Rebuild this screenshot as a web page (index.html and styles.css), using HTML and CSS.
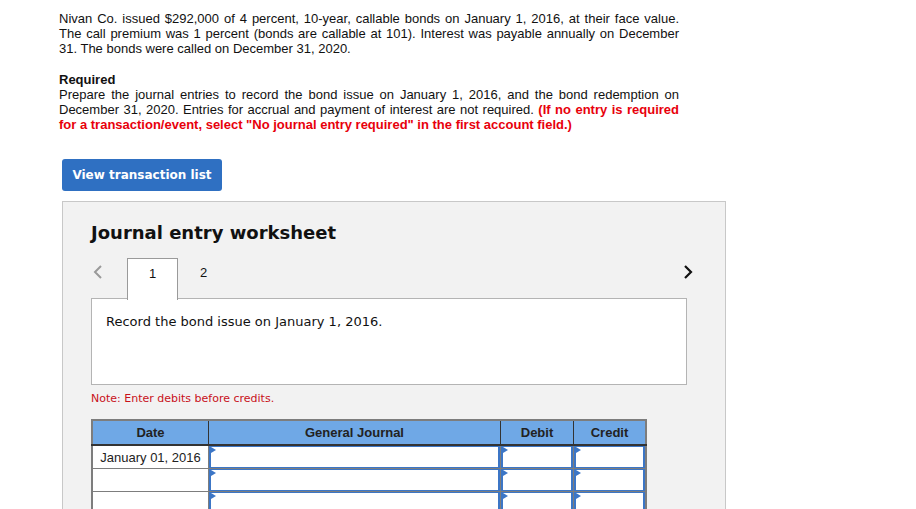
FILE: index.html
```html
<!DOCTYPE html>
<html lang="en">
<head>
  <meta charset="UTF-8">
  <title>Journal entry worksheet</title>
  <link rel="stylesheet" href="styles.css">
</head>
<body>

<div class="question">
  <p>Nivan Co. issued $292,000 of 4 percent, 10-year, callable bonds on January 1, 2016, at their face value. The call premium was 1 percent (bonds are callable at 101). Interest was payable annually on December 31. The bonds were called on December 31, 2020.</p>
  <p><b>Required</b><br>
  Prepare the journal entries to record the bond issue on January 1, 2016, and the bond redemption on December 31, 2020. Entries for accrual and payment of interest are not required. <span class="hint">(If no entry is required for a transaction/event, select "No journal entry required" in the first account field.)</span></p>
</div>

<button class="view-btn">View transaction list</button>

<div class="worksheet">
  <h2>Journal entry worksheet</h2>

  <div class="tabs">
    <span class="nav prev">
      <svg width="10" height="16" viewBox="0 0 10 16"><polyline points="8,2 2,8 8,14" fill="none" stroke="#9a9a9a" stroke-width="2"/></svg>
    </span>
    <span class="tab active">1</span>
    <span class="tab">2</span>
    <span class="spacer"></span>
    <span class="nav next">
      <svg width="10" height="16" viewBox="0 0 10 16"><polyline points="2,2 8,8 2,14" fill="none" stroke="#111" stroke-width="2.2"/></svg>
    </span>
  </div>

  <div class="prompt">Record the bond issue on January 1, 2016.</div>

  <div class="note">Note: Enter debits before credits.</div>

  <table class="journal">
    <thead>
      <tr>
        <th class="c-date">Date</th>
        <th class="c-acct">General Journal</th>
        <th class="c-num">Debit</th>
        <th>Credit</th>
      </tr>
    </thead>
    <tbody>
      <tr>
        <td class="date">January 01, 2016</td>
        <td class="in"><div class="field"></div></td>
        <td class="in"><div class="field"></div></td>
        <td class="in"><div class="field"></div></td>
      </tr>
      <tr>
        <td class="date"></td>
        <td class="in"><div class="field"></div></td>
        <td class="in"><div class="field"></div></td>
        <td class="in"><div class="field"></div></td>
      </tr>
      <tr>
        <td class="date"></td>
        <td class="in"><div class="field"></div></td>
        <td class="in"><div class="field"></div></td>
        <td class="in"><div class="field"></div></td>
      </tr>
    </tbody>
  </table>
</div>

</body>
</html>
```

FILE: styles.css
```css
body {
  margin: 0;
  font-family: 'Liberation Sans', Arial, sans-serif;
  color: #111;
  background: #fff;
  overflow: hidden;
}
.question {
  width: 620px;
  padding: 11px 0 0 59px;
  font-size: 13px;
  line-height: 15px;
}
.question p {
  margin: 0 0 16px 0;
  text-align: justify;
}
.question .hint {
  color: #e8000b;
  font-weight: bold;
}
.view-btn {
  display: block;
  margin: 27px 0 0 62px;
  width: 160px;
  height: 32px;
  border: none;
  border-radius: 3px;
  background-color: #2f70c2;
  color: #fff;
  font-family: 'DejaVu Sans', Verdana, sans-serif;
  font-weight: bold;
  font-size: 12px;
  padding: 0;
}
.worksheet {
  box-sizing: border-box;
  margin: 10px 0 0 62px;
  width: 664px;
  height: 320px;
  padding: 0 38px 0 28px;
  background-color: #f2f2f2;
  border: 1px solid #c8c8c8;
  font-family: 'DejaVu Sans', Verdana, sans-serif;
}
.worksheet h2 {
  margin: 19px 0 0 0;
  font-size: 18px;
  line-height: 24px;
  color: #111;
}
.tabs {
  display: flex;
  align-items: stretch;
  height: 41px;
  margin: 13px -6px -1px 0;
  font-size: 13px;
}
.nav {
  display: flex;
  align-items: center;
  padding-bottom: 14px;
}
.nav.prev {
  width: 36px;
  padding-left: 2px;
  box-sizing: border-box;
}
.spacer {
  flex: 1;
}
.tab {
  width: 51px;
  box-sizing: border-box;
  text-align: center;
  padding-top: 7px;
  color: #111;
  font-family: 'Liberation Sans', Arial, sans-serif;
}
.tab.active {
  background: #fff;
  border: 1px solid #9a9a9a;
  border-bottom: none;
  position: relative;
  z-index: 1;
  height: 42px;
}
.prompt {
  box-sizing: border-box;
  height: 87px;
  padding: 15px 14px 0 14px;
  background: #fff;
  border: 1px solid #b4b4b4;
  font-size: 13px;
  line-height: 16px;
  color: #111;
}
.note {
  margin-top: 7px;
  font-size: 11px;
  line-height: 14px;
  color: #c8101a;
}
.journal {
  margin-top: 13px;
  width: 556px;
  table-layout: fixed;
  border-collapse: collapse;
  font-family: 'Liberation Sans', Arial, sans-serif;
  font-size: 13px;
  border: 2px solid #7d7d7d;
}
.journal th {
  height: 23px;
  background: #6fa8e6;
  color: #222;
  font-weight: bold;
  border-right: 1px solid #333;
  border-bottom: 2px solid #333;
  padding: 0;
}
.journal th:last-child {
  border-right: none;
}
.c-date { width: 115px; }
.c-acct { width: 291px; }
.c-num { width: 72px; }
.journal td {
  height: 22px;
  padding: 0;
  background: #fff;
  border: 1px solid #7d7d7d;
}
.journal td.date {
  text-align: center;
  color: #222;
}
.journal td.in {
  vertical-align: top;
}
.field {
  position: relative;
  box-sizing: border-box;
  height: 22px;
  border-style: solid;
  border-color: #3c76c6;
  border-width: 1px 2px;
  background: #fff;
}
.field::before {
  content: "";
  position: absolute;
  top: 0;
  left: 0;
  border-left: 5px solid #3c76c6;
  border-top: 3px solid transparent;
  border-bottom: 3px solid transparent;
}
```
